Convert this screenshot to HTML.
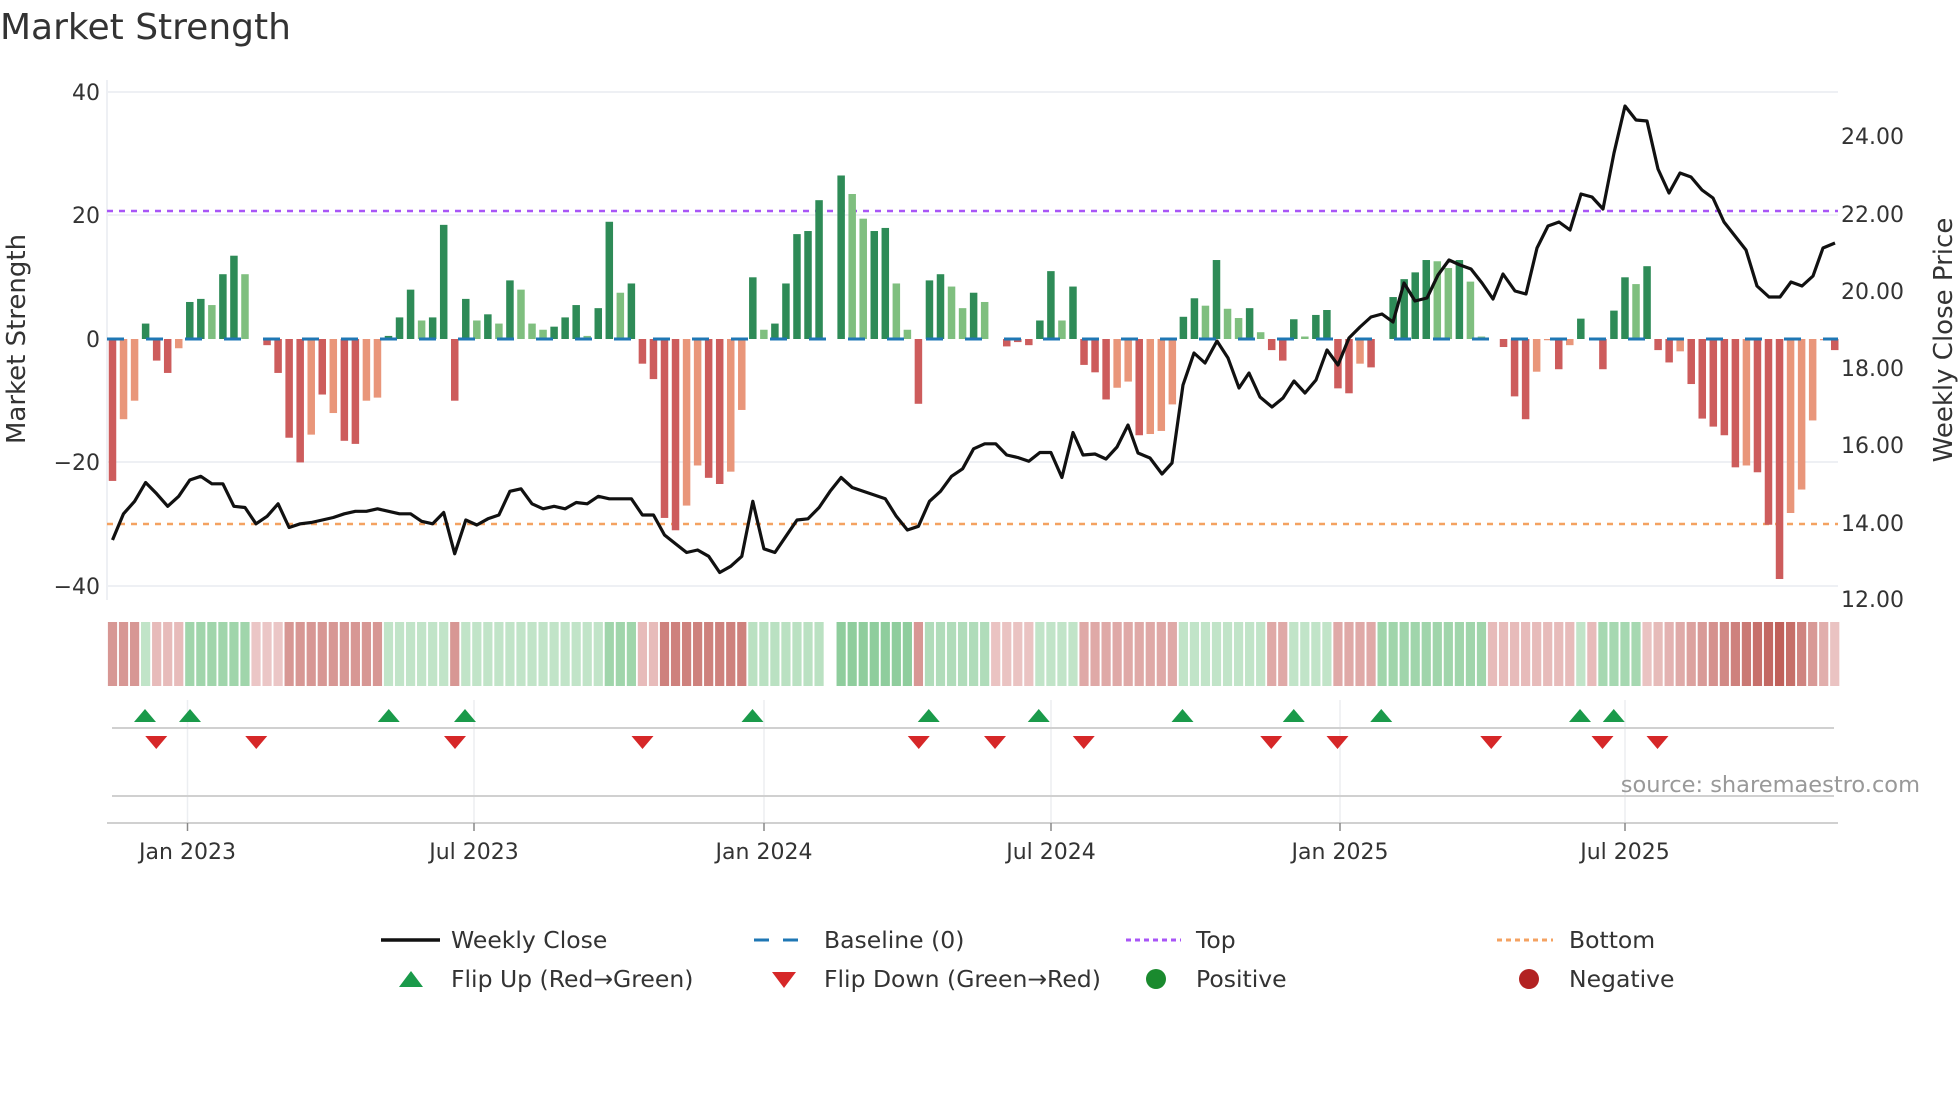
<!DOCTYPE html>
<html><head><meta charset="utf-8"><style>
html,body{margin:0;padding:0;background:#fff;}
svg{display:block;font-family:"DejaVu Sans","Liberation Sans",sans-serif;}
</style></head><body>
<svg id="s" width="1960" height="1102" viewBox="0 0 1960 1102" xmlns="http://www.w3.org/2000/svg">
<rect width="1960" height="1102" fill="#fff"/>
<text x="0" y="39" font-size="36" fill="#333">Market Strength</text>
<g id="grid" stroke="#eef0f4" stroke-width="2">
<line x1="107" y1="92" x2="1838" y2="92"/><line x1="107" y1="215" x2="1838" y2="215"/>
<line x1="107" y1="462" x2="1838" y2="462"/><line x1="107" y1="586" x2="1838" y2="586"/>
<line x1="107" y1="80" x2="107" y2="600"/>
</g>
<g font-size="22" fill="#333" text-anchor="end">
<text x="100" y="100">40</text><text x="100" y="223">20</text><text x="100" y="347">0</text>
<text x="100" y="470">−20</text><text x="100" y="594">−40</text>
</g>
<g font-size="22" fill="#333">
<text x="1841" y="144">24.00</text><text x="1841" y="222">22.00</text><text x="1841" y="299">20.00</text>
<text x="1841" y="376">18.00</text><text x="1841" y="453">16.00</text><text x="1841" y="531">14.00</text><text x="1841" y="607">12.00</text>
</g>
<text transform="translate(25,339) rotate(-90)" font-size="26" fill="#333" text-anchor="middle">Market Strength</text>
<text transform="translate(1952,340) rotate(-90)" font-size="26" fill="#333" text-anchor="middle">Weekly Close Price</text>
<line x1="107" y1="211" x2="1838" y2="211" stroke="#a855f7" stroke-width="2.5" stroke-dasharray="6,6"/>
<line x1="107" y1="524" x2="1838" y2="524" stroke="#f4a261" stroke-width="2.5" stroke-dasharray="6,6"/>
<g id="bars"></g>
<line x1="107" y1="339" x2="1838" y2="339" stroke="#1f77b4" stroke-width="3" stroke-dasharray="17,22"/>
<polyline id="price" fill="none" stroke="#111" stroke-width="3.2" stroke-linejoin="round"/>
<g id="heat"></g>
<g stroke="#eceef1" stroke-width="1.5">
<line x1="187.5" y1="700" x2="187.5" y2="823"/><line x1="474" y1="700" x2="474" y2="823"/>
<line x1="764" y1="700" x2="764" y2="823"/><line x1="1051" y1="700" x2="1051" y2="823"/>
<line x1="1340" y1="700" x2="1340" y2="823"/><line x1="1625" y1="700" x2="1625" y2="823"/>
</g>
<line x1="112" y1="728" x2="1834" y2="728" stroke="#d0d0d0" stroke-width="2"/>
<line x1="112" y1="796" x2="1834" y2="796" stroke="#d0d0d0" stroke-width="2"/>
<line x1="107" y1="823" x2="1838" y2="823" stroke="#d0d0d0" stroke-width="2"/>
<g id="flips"></g>
<g stroke="#888" stroke-width="1.5">
<line x1="187.5" y1="823" x2="187.5" y2="831"/><line x1="474" y1="823" x2="474" y2="831"/>
<line x1="764" y1="823" x2="764" y2="831"/><line x1="1051" y1="823" x2="1051" y2="831"/>
<line x1="1340" y1="823" x2="1340" y2="831"/><line x1="1625" y1="823" x2="1625" y2="831"/>
</g>
<g font-size="22" fill="#333" text-anchor="middle">
<text x="187.5" y="859">Jan 2023</text><text x="474" y="859">Jul 2023</text><text x="764" y="859">Jan 2024</text>
<text x="1051" y="859">Jul 2024</text><text x="1340" y="859">Jan 2025</text><text x="1625" y="859">Jul 2025</text>
</g>
<text x="1920" y="792" font-size="22.5" fill="#999" text-anchor="end">source: sharemaestro.com</text>
<g font-size="23.5" fill="#333">
<line x1="381" y1="940" x2="440" y2="940" stroke="#111" stroke-width="3.5"/>
<text x="451" y="948">Weekly Close</text>
<line x1="754" y1="940" x2="806" y2="940" stroke="#1f77b4" stroke-width="3" stroke-dasharray="15,14"/>
<text x="824" y="948">Baseline (0)</text>
<line x1="1126" y1="940" x2="1181" y2="940" stroke="#a855f7" stroke-width="3" stroke-dasharray="5,4"/>
<text x="1196" y="948">Top</text>
<line x1="1497" y1="940" x2="1553" y2="940" stroke="#f4a261" stroke-width="3" stroke-dasharray="5,4"/>
<text x="1569" y="948">Bottom</text>
<polygon points="399,987 423,987 411,971" fill="#1a9a4a"/>
<text x="451" y="987">Flip Up (Red→Green)</text>
<polygon points="772,972 796,972 784,988" fill="#d62728"/>
<text x="824" y="987">Flip Down (Green→Red)</text>
<circle cx="1156" cy="979" r="10" fill="#1a8a2e"/>
<text x="1196" y="987">Positive</text>
<circle cx="1529" cy="979" r="10" fill="#b22222"/>
<text x="1569" y="987">Negative</text>
</g>
</svg>
<script>
(function(){
var NS="http://www.w3.org/2000/svg";
function el(t,a,p){var e=document.createElementNS(NS,t);for(var k in a)e.setAttribute(k,a[k]);p.appendChild(e);return e;}
var B="-23,-13L,-10L,2.5,-3.5,-5.5,-1.5L,6,6.5,5.5L,10.5,13.5,10.5L,0,-1,-5.5,-16,-20,-15.5L,-9,-12L,-16.5,-17,-10L,-9.5L,0.5,3.5,8,3L,3.5,18.5,-10,6.5,3L,4,2.5L,9.5,8L,2.5L,1.5L,2,3.5,5.5,0.5L,5,19,7.5L,9,-4,-6.5,-29,-31,-27L,-20.5L,-22.5,-23.5,-21.5L,-11.5L,10,1.5L,2.5,9,17,17.5,22.5,0,26.5,23.5L,19.5L,17.5,18,9L,1.5L,-10.5,9.5,10.5,8.5L,5L,7.5,6L,0,-1.2,-0.5,-1,3,11,3L,8.5,-4.2,-5.4,-9.8,-7.9L,-6.9L,-15.6,-15.4L,-14.9L,-10.6L,3.6,6.6,5.4L,12.8,4.9L,3.4L,5,1.1L,-1.8,-3.5,3.2,0.4L,3.9,4.7,-8,-8.8,-4L,-4.6,0,6.8,9.7,10.8,12.8,12.6L,11.5L,12.8,9.3L,0.4L,0,-1.3,-9.3,-13,-5.3L,-0.2L,-4.9,-1L,3.3,0,-4.9,4.6,10,8.9L,11.8,-1.8,-3.8,-2L,-7.3,-12.9,-14.2,-15.6,-20.8,-20.5L,-21.6,-30.1,-38.9,-28.2L,-24.4L,-13.2L,-0.2L,-1.8".split(",");
var g=document.getElementById("bars");
function X(i){return 112.5+11.04*i;}
B.forEach(function(s,i){var L=s.indexOf("L")>=0;var v=parseFloat(s);if(v===0)return;
 var h=Math.abs(v)*6.17;var c=v>0?(L?"#7fbf7f":"#2e8b57"):(L?"#e9967a":"#cd5c5c");
 el("rect",{x:X(i)-3.75,y:v>0?339-h:339,width:7.5,height:h,fill:c},g);});
var D=[432,411,401,386,395,405,397,384,381,387,387,405,406,419,413,403,422,419,418,416,414,411,409,409,407,409,411,411,417,419,410,443,416,420,415,412,393,391,403,407,405,407,402,403,397,399,399,399,412,412,428,435,442,440,445,458,453,445,401,439,442,429,416,415,406,393,382,390,393,396,399,413,424,421,401,393,381,375,359,355,355,364,366,369,362,362,382,346];
var pts=D.map(function(y,i){return X(i).toFixed(1)+","+(y*1.25).toFixed(1);});
var R=[[1083,455],[1095,454],[1106,459],[1117,447],[1128,425],[1138,453],[1150,458],[1162,474],[1172,463],[1183,385],[1194,353],[1205,363],[1217,341],[1228,358],[1239,388],[1249,373],[1260,397],[1272,407],[1283,398],[1294,381],[1305,393],[1316,380],[1327,350],[1338,365],[1349,338],[1360,327],[1371,317],[1382,314],[1393,322],[1404,283],[1415,301],[1427,298],[1438,275],[1449,260],[1460,265],[1471,269],[1482,283],[1493,299],[1503,274],[1515,291],[1526,294],[1537,248],[1548,226],[1559,222],[1570,230],[1581,194],[1592,197],[1603,209],[1614,153],[1625,106],[1636,120],[1647,121],[1658,169],[1669,193],[1680,173],[1691,177],[1702,190],[1713,198],[1724,222],[1735,236],[1746,250],[1757,286],[1769,297],[1780,297],[1791,282],[1802,286],[1813,276],[1823,248],[1835,243]];
R.forEach(function(p){pts.push(p[0]+","+p[1]);});
document.getElementById("price").setAttribute("points",pts.join(" "));
var H=[];function set(a,b,v){for(var i=a;i<=b;i++)H[i]=v;}
set(0,2,-2);set(3,3,1);set(4,6,-1);set(7,12,2);set(13,15,-0.7);set(16,24,-2);set(25,30,1);set(31,31,-2);set(32,44,1);set(45,47,2);set(48,49,-1);set(50,57,-2.6);set(58,64,1.2);H[65]=null;set(66,72,2.5);set(73,73,-2);set(74,79,1.5);set(80,83,-0.8);set(84,87,1);set(88,96,-1.5);set(97,104,1);set(105,106,-1.5);set(107,110,1);set(111,114,-1.5);set(115,124,2);set(125,132,-1);set(133,133,1);set(134,134,-1);set(135,138,1.8);
for(var i=139;i<=151;i++)H[i]=-(0.8+2.7*(i-139)/12);for(var i=152;i<=156;i++)H[i]=-(3.1-2.3*(i-152)/4);
function mix(a,b,t){return "rgb("+[0,1,2].map(function(k){return Math.round(a[k]+(b[k]-a[k])*t);}).join(",")+")";}
var hg=document.getElementById("heat");
H.forEach(function(v,i){if(v==null)return;var t=Math.min(Math.abs(v)/3.5,1);
 var c=v>0?mix([226,243,229],[110,190,128],t):mix([246,224,225],[192,96,90],t);
 el("rect",{x:X(i)-4.6,y:622,width:9.2,height:64,fill:c},hg);});
var fg=document.getElementById("flips");
[116,152,311,372,602,743,831,946,1035,1105,1264,1291].forEach(function(x){x*=1.25;el("polygon",{points:(x-11)+",722 "+(x+11)+",722 "+x+",709",fill:"#1a9a4a"},fg);});
[125,205,364,514,735,796,867,1017,1070,1193,1282,1326].forEach(function(x){x*=1.25;el("polygon",{points:(x-11)+",736 "+(x+11)+",736 "+x+",749",fill:"#d62728"},fg);});
})();
</script>
</body></html>
